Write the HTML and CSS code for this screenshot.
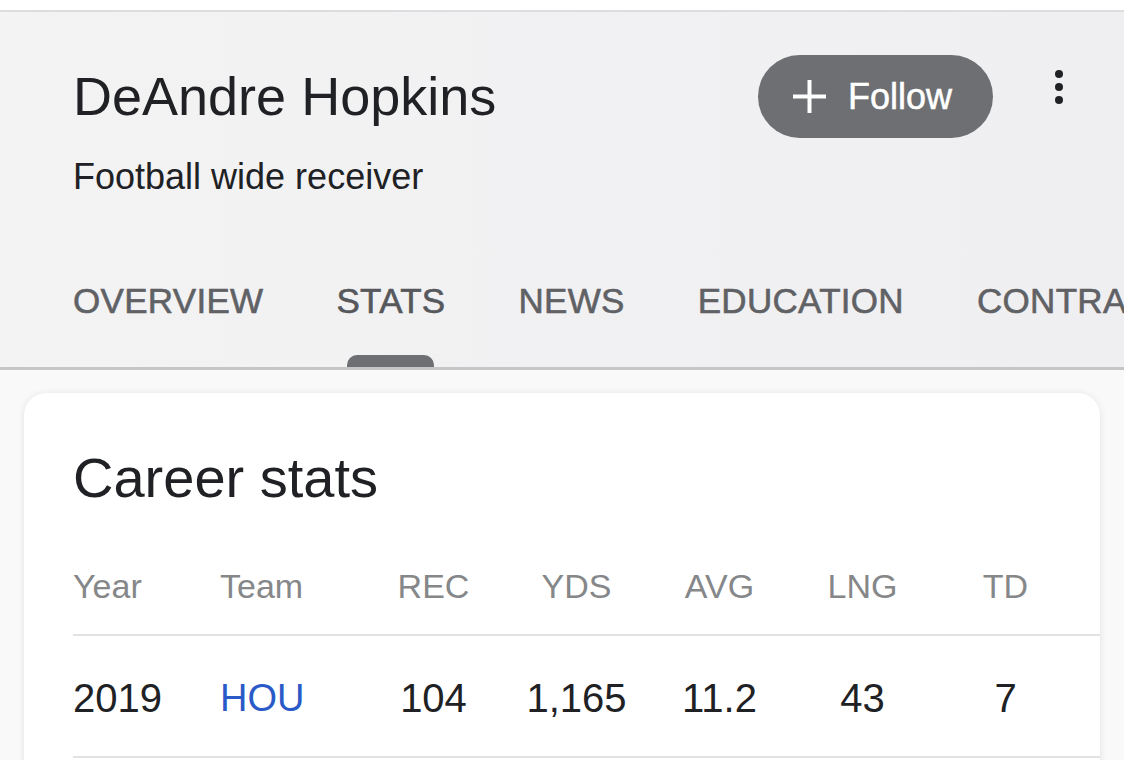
FILE: index.html
```html
<!DOCTYPE html>
<html lang="en">
<head>
<meta charset="utf-8">
<title>DeAndre Hopkins</title>
<link rel="stylesheet" href="styles.css">
</head>
<body>
<div class="topbar"></div>
<header class="entity">
  <div class="title-row">
    <div class="titles">
      <h1 class="name">DeAndre Hopkins</h1>
      <div class="subtitle">Football wide receiver</div>
    </div>
    <div class="actions">
      <button class="follow">
        <svg class="plus" width="33" height="33" viewBox="0 0 33 33" aria-hidden="true">
          <path d="M16.5 0v33M0 16.5h33" stroke="#fff" stroke-width="4" fill="none"/>
        </svg>
        <span>Follow</span>
      </button>
      <div class="more" aria-label="More">
        <span class="dot"></span><span class="dot"></span><span class="dot"></span>
      </div>
    </div>
  </div>
  <nav class="tabs">
    <div class="tab"><span class="tab-label">OVERVIEW</span><span class="ind"></span></div>
    <div class="tab active"><span class="tab-label">STATS</span><span class="ind"></span></div>
    <div class="tab"><span class="tab-label">NEWS</span><span class="ind"></span></div>
    <div class="tab"><span class="tab-label">EDUCATION</span><span class="ind"></span></div>
    <div class="tab"><span class="tab-label">CONTRACT</span><span class="ind"></span></div>
  </nav>
</header>
<main class="content">
  <section class="card">
    <h2 class="card-title">Career stats</h2>
    <div class="stats">
      <div class="row head">
        <div class="c left">Year</div>
        <div class="c left">Team</div>
        <div class="c">REC</div>
        <div class="c">YDS</div>
        <div class="c">AVG</div>
        <div class="c">LNG</div>
        <div class="c">TD</div>
      </div>
      <div class="row body">
        <div class="c left">2019</div>
        <div class="c left team">HOU</div>
        <div class="c">104</div>
        <div class="c">1,165</div>
        <div class="c">11.2</div>
        <div class="c">43</div>
        <div class="c">7</div>
      </div>
    </div>
  </section>
</main>
</body>
</html>
```
FILE: styles.css
```css
* { box-sizing: border-box; }
html, body { margin: 0; padding: 0; }
body {
  width: 1124px;
  height: 760px;
  overflow: hidden;
  background: #f9f9f9;
  font-family: "Liberation Sans", Arial, sans-serif;
  color: #202124;
}
.topbar {
  height: 12px;
  background: #fff;
  border-bottom: 2px solid #dddddf;
}
.entity {
  background: linear-gradient(to right, #f3f3f4 0%, #efeff1 100%);
  border-bottom: 3px solid #c6c6c8;
  padding-top: 43px;
  overflow: hidden;
}
.title-row {
  display: flex;
  justify-content: space-between;
  align-items: flex-start;
}
.titles {
  padding-left: 73px;
  padding-top: 14px;
}
.name {
  margin: 0;
  font-size: 54px;
  line-height: 54px;
  font-weight: 400;
  color: #202124;
}
.subtitle {
  margin-top: 36px;
  font-size: 36px;
  line-height: 36px;
  color: #202124;
}
.actions {
  display: flex;
  align-items: flex-start;
  gap: 62px;
  padding-right: 61px;
}
.follow {
  display: flex;
  align-items: center;
  width: 235px;
  height: 83px;
  padding: 0 0 0 35px;
  gap: 22px;
  border: none;
  border-radius: 42px;
  background: #6d6f72;
  color: #fff;
  font-family: "Liberation Sans", Arial, sans-serif;
  font-size: 36px;
  line-height: 36px;
  -webkit-text-stroke: 0.5px #fff;
}
.plus { flex: none; }
.more {
  margin-top: 15px;
  display: flex;
  flex-direction: column;
  gap: 5px;
}
.dot {
  width: 8px;
  height: 8px;
  border-radius: 50%;
  background: #202124;
}
.tabs {
  margin-top: 83px;
  display: flex;
  gap: 73px;
  padding-left: 73px;
  white-space: nowrap;
}
.tab {
  display: flex;
  flex-direction: column;
  align-items: center;
  gap: 32px;
  flex: none;
}
.tab-label {
  font-size: 35px;
  line-height: 45px;
  letter-spacing: 0.3px;
  color: #5f6165;
  -webkit-text-stroke: 0.6px #5f6165;
}
.ind {
  width: 87px;
  height: 12px;
  border-radius: 10px 10px 0 0;
  background: transparent;
}
.tab.active .ind { background: #6d6f72; }
.tab.active .tab-label { color: #56585c; -webkit-text-stroke-color: #56585c; }
.content {
  padding: 23px 24px 0;
}
.card {
  background: #fff;
  border-radius: 22px;
  box-shadow: 0 1px 7px rgba(0, 0, 0, 0.10);
  padding: 57px 0 0 49px;
  height: 420px;
}
.card-title {
  margin: 0;
  font-size: 56px;
  line-height: 55px;
  font-weight: 400;
  color: #202124;
}
.stats { margin-top: 64px; }
.row {
  display: grid;
  grid-template-columns: 147px 142px repeat(5, 143px) 1fr;
  border-bottom: 2px solid #e2e2e4;
}
.c { text-align: center; }
.c.left { text-align: left; }
.row.head {
  font-size: 34px;
  line-height: 34px;
  color: #858789;
  padding-bottom: 31px;
}
.row.body {
  font-size: 40px;
  line-height: 40px;
  color: #202124;
  padding-top: 42px;
  padding-bottom: 38px;
}
.team { color: #2a5ac8; font-size: 38px; }
```
